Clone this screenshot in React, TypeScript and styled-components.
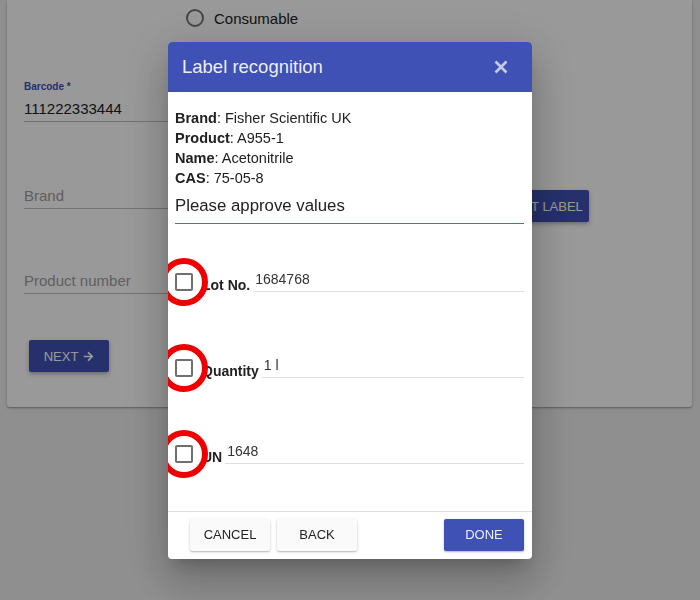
import React from "react";
import styled, { createGlobalStyle } from "styled-components";
import { FaArrowRight } from "react-icons/fa";

const GlobalStyle = createGlobalStyle`
  html, body {
    margin: 0;
    padding: 0;
    background: #eeeeee;
    font-family: "Liberation Sans", Arial, sans-serif;
    overflow: hidden;
  }
`;

const Page = styled.div`
  width: 700px;
  height: 600px;
  background: #eeeeee;
`;

const Card = styled.div`
  margin: 0 8px 0 7px;
  padding: 0 17px 35px;
  background: #fff;
  border-radius: 0 0 3px 3px;
  box-shadow: 0 1px 3px rgba(0, 0, 0, 0.25), 0 1px 1px rgba(0, 0, 0, 0.15);
`;

const RadioRow = styled.div`
  height: 36px;
  display: flex;
  align-items: center;
  gap: 10px;
  padding-left: 162px;
  font-size: 15px;
  color: #212121;
`;

const RadioCircle = styled.span`
  width: 14px;
  height: 14px;
  border: 2px solid #757575;
  border-radius: 50%;
`;

const Field = styled.div<{ $top: number; $width?: number }>`
  margin-top: ${(p) => p.$top}px;
  width: ${(p) => p.$width ?? 470}px;
`;

const FieldLabel = styled.div`
  font-size: 10px;
  line-height: 12px;
  font-weight: bold;
  color: #3f51b5;
`;

const FieldInput = styled.div<{ $placeholder?: boolean }>`
  margin-top: 3px;
  height: 25px;
  line-height: 26px;
  font-size: 15px;
  color: ${(p) => (p.$placeholder ? "#9e9e9e" : "#212121")};
  border-bottom: 1px solid #bdbdbd;
`;

const FieldWithButton = styled.div`
  display: flex;
  align-items: flex-start;
  gap: 14px;
`;

const RaisedButton = styled.button<{ $top?: number; $width?: number }>`
  margin-top: ${(p) => p.$top ?? 0}px;
  height: 32px;
  width: ${(p) => (p.$width ? `${p.$width}px` : "auto")};
  padding: 0 14px;
  border: none;
  border-radius: 2px;
  background: #3f51b5;
  color: #fff;
  font-family: inherit;
  font-size: 13px;
  font-weight: 500;
  display: flex;
  align-items: center;
  justify-content: center;
  gap: 5px;
  box-shadow: 0 2px 4px rgba(0, 0, 0, 0.3);
`;

const LabelButton = styled(RaisedButton)`
  padding: 0 6px 0 14px;
`;

const NextButton = styled(RaisedButton)`
  margin-left: 5px;
`;

const Overlay = styled.div`
  position: fixed;
  inset: 0;
  background: rgba(0, 0, 0, 0.4);
  display: flex;
  align-items: center;
  justify-content: center;
`;

const Dialog = styled.div`
  width: 364px;
  height: 517px;
  background: #fff;
  border-radius: 4px;
  overflow: hidden;
  display: flex;
  flex-direction: column;
  box-shadow: 0 11px 15px -7px rgba(0, 0, 0, 0.2), 0 24px 38px 3px rgba(0, 0, 0, 0.14),
    0 9px 46px 8px rgba(0, 0, 0, 0.12);
`;

const DialogHeader = styled.div`
  height: 50px;
  flex: none;
  background: #3f51b5;
  display: flex;
  align-items: center;
  justify-content: space-between;
  padding: 0 24px 0 14px;
`;

const DialogTitle = styled.div`
  font-size: 18.5px;
  color: rgba(255, 255, 255, 0.92);
`;

const DialogBody = styled.div`
  flex: 1;
  padding: 16px 8px 14px 7px;
  color: #212121;
`;

const InfoLine = styled.div`
  font-size: 14.5px;
  line-height: 20px;

  b {
    font-weight: bold;
  }
`;

const Heading = styled.div`
  margin-top: 6px;
  font-size: 16.8px;
  line-height: 24px;
  padding-bottom: 5px;
  border-bottom: 1px solid #2a7cc0;
`;

const Rows = styled.div`
  margin-top: 15px;
`;

const ApproveRow = styled.div`
  height: 86px;
  display: flex;
  align-items: center;
`;

const CheckWrap = styled.div`
  position: relative;
  width: 18px;
  height: 18px;
  margin-right: 9px;
  flex: none;
`;

const CheckBox = styled.span`
  display: block;
  width: 14px;
  height: 14px;
  border: 2px solid #707070;
  border-radius: 2px;
`;

const Highlight = styled.span`
  position: absolute;
  left: -15px;
  top: -15px;
  width: 36px;
  height: 36px;
  border: 6px solid #ee0000;
  border-radius: 50%;
`;

const RowLabel = styled.span`
  font-size: 14px;
  line-height: 16px;
  font-weight: bold;
  padding-top: 6px;
  margin-right: 3px;
  white-space: nowrap;
`;

const RowInput = styled.div`
  flex: 1;
  height: 14px;
  line-height: 14px;
  padding: 0 2px 5px;
  font-size: 14px;
  color: #333;
  border-bottom: 1px solid #e0e0e0;
`;

const DialogFooter = styled.div`
  flex: none;
  border-top: 1px solid #e0e0e0;
  padding: 7px 8px 8px 22px;
  display: flex;
  gap: 7px;
`;

const FlatButton = styled.button<{ $primary?: boolean }>`
  width: 80px;
  height: 32px;
  border: none;
  border-radius: 2px;
  font-family: inherit;
  font-size: 13px;
  font-weight: 500;
  background: ${(p) => (p.$primary ? "#3f51b5" : "#fafafa")};
  color: ${(p) => (p.$primary ? "rgba(255,255,255,0.9)" : "#212121")};
  box-shadow: 0 1px 3px rgba(0, 0, 0, 0.2), 0 1px 1px rgba(0, 0, 0, 0.12);
  margin-left: ${(p) => (p.$primary ? "auto" : "0")};
`;

const CloseIcon = () => (
  <svg width="14" height="14" viewBox="0 0 14 14">
    <path d="M1.5 1.5 L12.5 12.5 M12.5 1.5 L1.5 12.5" stroke="#c5cae9" strokeWidth="2.6" strokeLinecap="butt" />
  </svg>
);

const rows = [
  { label: "Lot No.", value: "1684768" },
  { label: "Quantity", value: "1 l" },
  { label: "UN", value: "1648" },
];

export default function App() {
  return (
    <>
      <GlobalStyle />
      <Page>
        <Card>
          <RadioRow>
            <RadioCircle />
            Consumable
          </RadioRow>
          <Field $top={45}>
            <FieldLabel>Barcode *</FieldLabel>
            <FieldInput>111222333444</FieldInput>
          </Field>
          <FieldWithButton>
            <Field $top={58} $width={448}>
              <FieldInput $placeholder>Brand</FieldInput>
            </Field>
            <LabelButton $top={68}>PRINT LABEL</LabelButton>
          </FieldWithButton>
          <Field $top={46}>
            <FieldInput $placeholder>Product number</FieldInput>
          </Field>
          <NextButton $top={46} $width={80}>
            NEXT <FaArrowRight size={11} />
          </NextButton>
        </Card>
      </Page>
      <Overlay>
        <Dialog>
          <DialogHeader>
            <DialogTitle>Label recognition</DialogTitle>
            <CloseIcon />
          </DialogHeader>
          <DialogBody>
            <InfoLine><b>Brand</b>: Fisher Scientific UK</InfoLine>
            <InfoLine><b>Product</b>: A955-1</InfoLine>
            <InfoLine><b>Name</b>: Acetonitrile</InfoLine>
            <InfoLine><b>CAS</b>: 75-05-8</InfoLine>
            <Heading>Please approve values</Heading>
            <Rows>
              {rows.map((r) => (
                <ApproveRow key={r.label}>
                  <CheckWrap>
                    <CheckBox />
                    <Highlight />
                  </CheckWrap>
                  <RowLabel>{r.label}</RowLabel>
                  <RowInput>{r.value}</RowInput>
                </ApproveRow>
              ))}
            </Rows>
          </DialogBody>
          <DialogFooter>
            <FlatButton>CANCEL</FlatButton>
            <FlatButton>BACK</FlatButton>
            <FlatButton $primary>DONE</FlatButton>
          </DialogFooter>
        </Dialog>
      </Overlay>
    </>
  );
}
